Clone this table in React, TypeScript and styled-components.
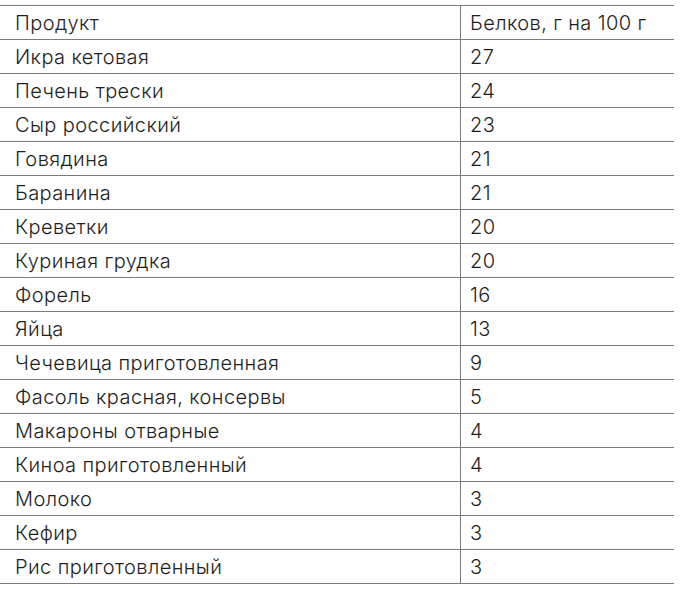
import styled, { createGlobalStyle } from 'styled-components';

const GlobalStyle = createGlobalStyle`
  html, body {
    margin: 0;
    padding: 0;
    background: #ffffff;
  }
`;

const rows: [string, string][] = [
  ['Икра кетовая', '27'],
  ['Печень трески', '24'],
  ['Сыр российский', '23'],
  ['Говядина', '21'],
  ['Баранина', '21'],
  ['Креветки', '20'],
  ['Куриная грудка', '20'],
  ['Форель', '16'],
  ['Яйца', '13'],
  ['Чечевица приготовленная', '9'],
  ['Фасоль красная, консервы', '5'],
  ['Макароны отварные', '4'],
  ['Киноа приготовленный', '4'],
  ['Молоко', '3'],
  ['Кефир', '3'],
  ['Рис приготовленный', '3'],
];

function App() {
  return (
    <>
      <GlobalStyle />
      <Page>
        <Table>
          <thead>
            <Row>
              <Cell>Продукт</Cell>
              <Cell $value>Белков, г на 100 г</Cell>
            </Row>
          </thead>
          <tbody>
            {rows.map(([name, value]) => (
              <Row key={name}>
                <Cell>{name}</Cell>
                <Cell $value>{value}</Cell>
              </Row>
            ))}
          </tbody>
        </Table>
      </Page>
    </>
  );
}

export default App;

const Page = styled.div`
  padding: 5px 6px 0 0;
`;

const Table = styled.table`
  width: 674px;
  border-collapse: collapse;
  font-family: Inter, 'Noto Sans', sans-serif;
  font-size: 20px;
  letter-spacing: 0.4px;
  color: #1e1e1e;
  border-top: 1px solid #7a7a7a;
`;

const Row = styled.tr`
  height: 34px;
  border-bottom: 1px solid #7a7a7a;
`;

const Cell = styled.td<{ $value?: boolean }>`
  padding: 1px 0 0 ${({ $value }) => ($value ? '9px' : '15px')};
  width: ${({ $value }) => ($value ? 'auto' : '445px')};
  border-left: ${({ $value }) => ($value ? '1px solid #7a7a7a' : 'none')};
  vertical-align: middle;
  font-weight: 300;
  line-height: 1;
  white-space: nowrap;
`;
